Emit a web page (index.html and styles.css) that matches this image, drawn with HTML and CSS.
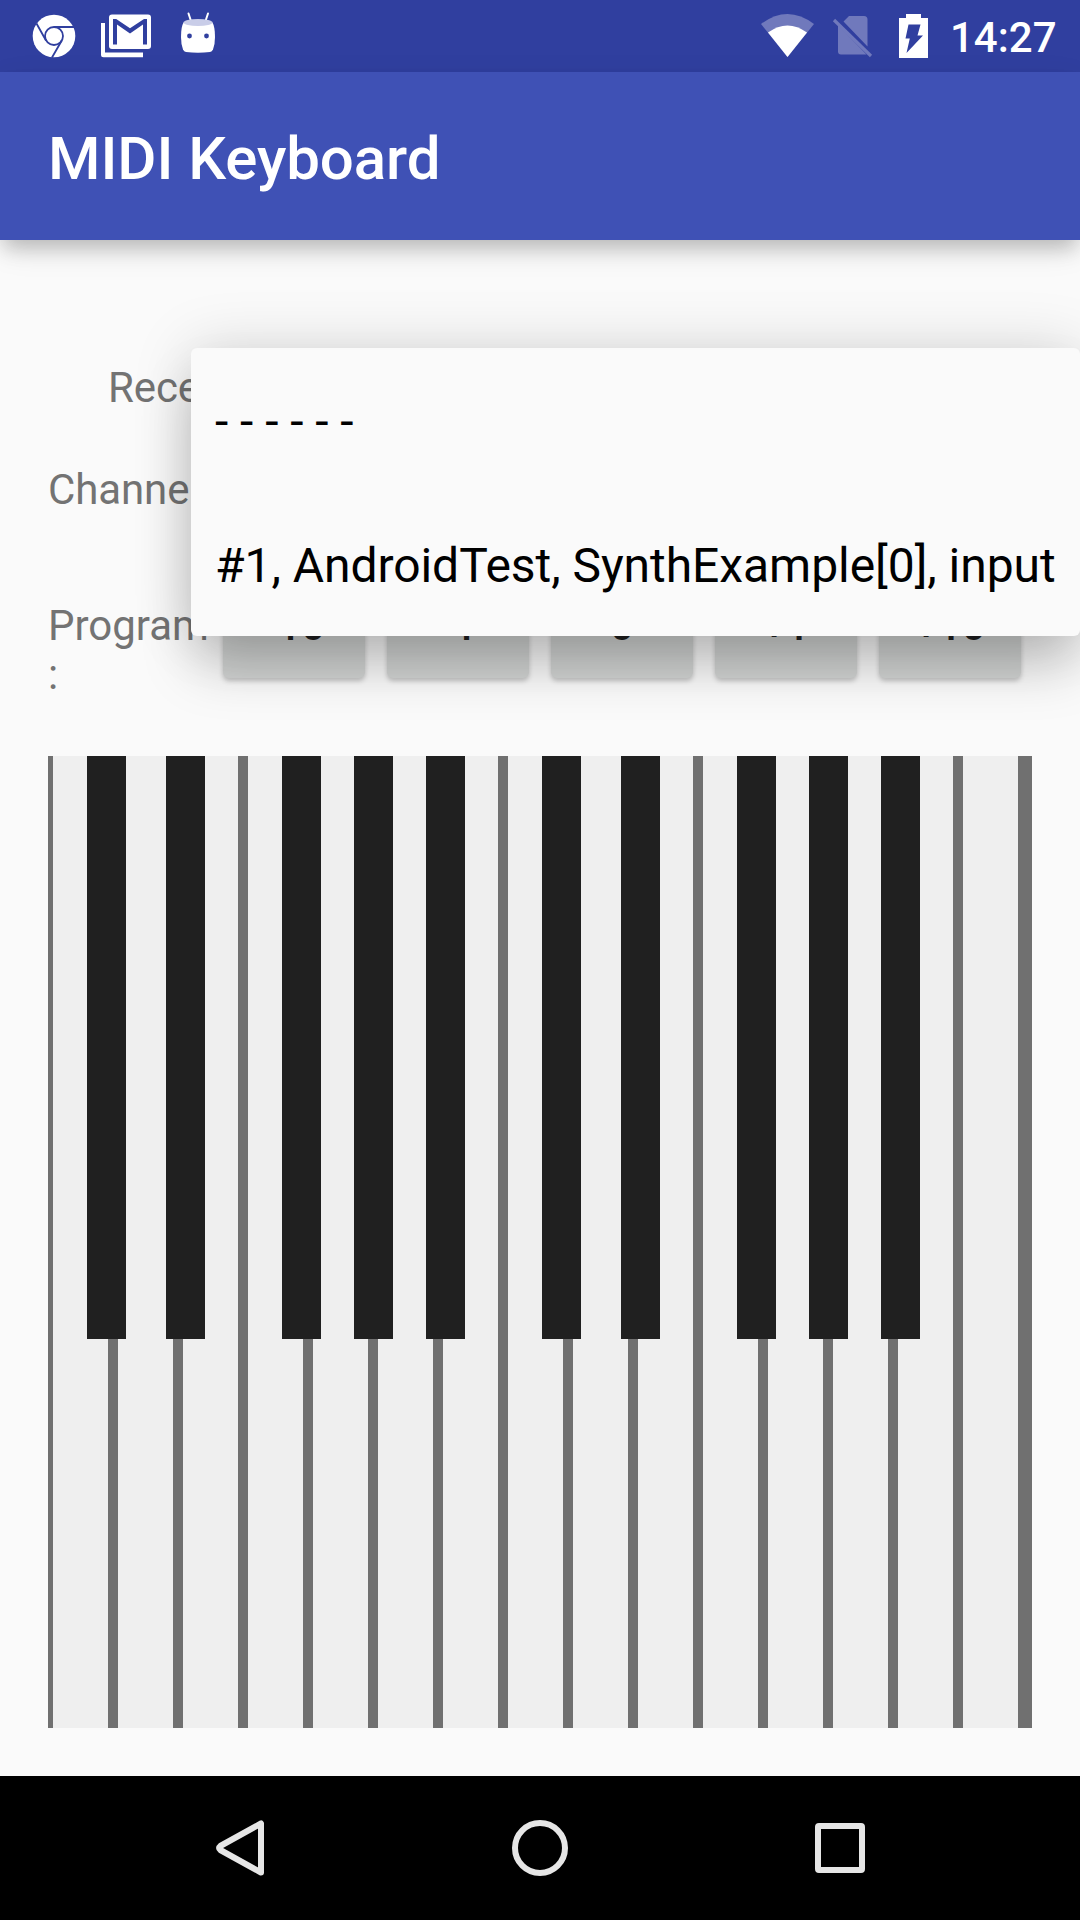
FILE: index.html
```html
<!DOCTYPE html>
<html lang="en">
<head>
<meta charset="utf-8">
<title>MIDI Keyboard</title>
<link rel="stylesheet" href="styles.css">
</head>
<body>
<div class="screen">
  <header class="status">
    <svg class="status-icons" width="240" height="72" viewBox="0 0 240 72">
      <circle cx="54" cy="36" r="21.3" fill="#fff"/>
      <g fill="none" stroke="#303f9f" stroke-width="1.8">
        <circle cx="54" cy="36" r="9"/>
        <path d="M54 27H74M46 40.500L36.500 23.500M61.800 40.500L52 57.500"/>
      </g>
      <path d="M101 23h4v29.500h38v4.800h-39.500q-2.500 0-2.500-2.500z" fill="#fff"/>
      <rect x="109" y="14.500" width="42" height="34.500" rx="3" fill="#fff"/>
      <path d="M113 44.500V19h3.200L130 28.300 144 19h3v25.500h-4V24.500L130 33.500 117 24.500v20z" fill="#303f9f"/>
      <path d="M188.500 13.500L191 21M208 13.500L205.500 21" stroke="#fff" stroke-width="2" stroke-linecap="round"/>
      <path d="M183.500 22.500Q181 27 181 37q0 7 2 12.500 1 2 3 2.500 12 1.500 24 0 2-.5 3-2.500 2-5.500 2-12.500 0-10-2.500-14.500z" fill="#fff"/>
      <ellipse cx="198" cy="22.500" rx="14.500" ry="3.500" fill="#c9cde8"/>
      <circle cx="189.500" cy="36" r="2.400" fill="#303f9f"/><circle cx="206.500" cy="36" r="2.400" fill="#303f9f"/>
    </svg>
    <div class="status-right">
      <svg width="200" height="72" viewBox="750 0 200 72">
        <path d="M787.500 57L761 24q26.500-20 53 0z" fill="#7079bc"/>
        <path d="M787.500 57L768 32.500q19.500-14 39 0z" fill="#fff"/>
        <path d="M849 16h15q3.500 0 3.500 3.500v27L843.500 21.500zM838 25l28.500 29.500H841q-3 0-3-3z" fill="#7079bc"/>
        <path d="M834 20L871 56" stroke="#7079bc" stroke-width="3.200"/>
        <path d="M899 18h7v-4h15v4h7v40h-29z" fill="#fff"/>
        <path d="M908.500 24.500h12l-3 11h5.500l-16.500 17.500 3.300-14.500h-4.300z" fill="#303f9f"/>
      </svg>
      <span class="clock">14:27</span>
    </div>
  </header>
  <div class="appbar"><h1>MIDI Keyboard</h1></div>

  <main>
    <div class="row receiver">Receiver:</div>
    <div class="row channel">Channel:</div>
    <div class="row program">
      <div class="label">Program :</div>
      <div class="buttons">
        <button>-10</button><button>-1</button><button>0</button><button>+1</button><button>+10</button>
      </div>
    </div>
    <svg class="keyboard" width="984" height="972" viewBox="48 756 984 972" shape-rendering="crispEdges">
      <rect x="48" y="756" width="984" height="972" fill="#707070"/>
      <path fill="#efefef" d="M53 756h55v972h-55zM118 756h55v972h-55zM183 756h55v972h-55zM248 756h55v972h-55zM313 756h55v972h-55zM378 756h55v972h-55zM443 756h55v972h-55zM508 756h55v972h-55zM573 756h55v972h-55zM638 756h55v972h-55zM703 756h55v972h-55zM768 756h55v972h-55zM833 756h55v972h-55zM898 756h55v972h-55zM963 756h55v972h-55z"/>
      <path fill="#202020" d="M87 756h39v583h-39zM166 756h39v583h-39zM282 756h39v583h-39zM354 756h39v583h-39zM426 756h39v583h-39zM542 756h39v583h-39zM621 756h39v583h-39zM737 756h39v583h-39zM809 756h39v583h-39zM881 756h39v583h-39z"/>
    </svg>
  </main>

  <nav>
    <svg width="1080" height="144" viewBox="0 1776 1080 144" fill="none" stroke="#e6e6e6" stroke-width="6" stroke-linejoin="round">
      <path d="M261 1823.500v49L220.300 1850q-2.500-2 0-4z"/>
      <circle cx="540" cy="1848" r="25"/>
      <rect x="818" y="1826" width="44" height="44" rx="1"/>
    </svg>
  </nav>

  <div class="popup">
    <div class="option">- - - - - -</div>
    <div class="option">#1, AndroidTest, SynthExample[0], input</div>
  </div>
</div>
</body>
</html>
```
FILE: styles.css
```css
* { box-sizing: border-box; }
body { margin: 0; font-family: Roboto, sans-serif; background: #fafafa; }
svg { display: block; flex: none; }

.screen {
  position: relative;
  width: 1080px;
  height: 1920px;
  overflow: hidden;
  display: flex;
  flex-direction: column;
}

.status {
  height: 72px;
  flex: none;
  display: flex;
  justify-content: space-between;
  background: #303f9f;
  color: #fff;
}
.status-right { display: flex; padding-right: 26px; }
.clock {
  width: 104px;
  text-align: right;
  font-size: 42px;
  font-weight: 500;
  line-height: 75px;
  white-space: nowrap;
}

.appbar {
  height: 168px;
  flex: none;
  padding-left: 48px;
  background: #3f51b5;
  color: #fff;
  box-shadow: 0 12px 18px -4px rgba(0, 0, 0, .18), 0 10px 30px -2px rgba(0, 0, 0, .12);
}
h1 { margin: 0; font-size: 60px; font-weight: 500; line-height: 173px; letter-spacing: -.08px; }

main {
  flex: 1;
  padding: 74px 48px 0;
  display: flex;
  flex-direction: column;
  font-size: 42px;
  line-height: 49px;
  color: #737373;
}
.row { display: flex; }
.receiver { height: 146px; align-items: center; padding-left: 60px; letter-spacing: -.1px; }
.channel { height: 111px; padding-top: 5px; letter-spacing: -.1px; }
.program { height: 185px; align-items: baseline; }
.label { width: 171px; flex: none; }
.buttons { display: flex; gap: 22.5px; padding-left: 4.3px; }
button {
  width: 141.5px;
  height: 107px;
  flex: none;
  border: 0;
  border-radius: 6px;
  padding: 2px 0 0;
  background: #d3d5d4;
  color: #212121;
  font: 500 42px/105px Roboto, sans-serif;
  box-shadow: 0 3px 5px rgba(0, 0, 0, .22);
}

nav { height: 144px; flex: none; background: #000; }

.popup {
  position: absolute;
  left: 191px;
  top: 348px;
  width: 889px;
  height: 288px;
  padding: 2px 0 0 24px;
  border-radius: 6px;
  background: #fafafa;
  color: #000;
  font-size: 48px;
  line-height: 144px;
  letter-spacing: -.05px;
  white-space: nowrap;
  box-shadow: 0 34px 54px -4px rgba(0, 0, 0, .21), 0 0 60px rgba(0, 0, 0, .15);
}
.option { height: 144px; }
```
